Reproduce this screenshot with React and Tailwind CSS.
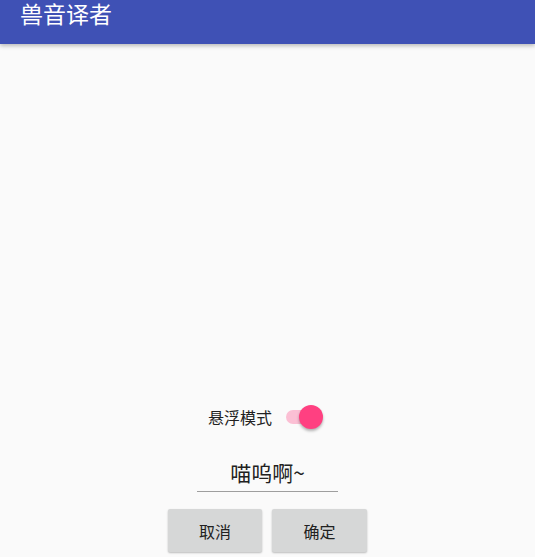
import React from "react";

export default function App() {
  const font = { fontFamily: '"Noto Sans CJK SC", "Noto Sans", sans-serif' };
  return (
    <div className="w-[535px] h-[557px] bg-[#fafafa] flex flex-col overflow-hidden" style={font}>
      <div className="h-[44px] bg-[#3f51b5] shadow-[0_2px_4px_rgba(0,0,0,0.25)] relative z-10 flex items-start pl-[20px]">
        <span className="text-white text-[23px] leading-[27px] mt-[0px]">兽音译者</span>
      </div>
      <div className="flex-1 flex flex-col items-center justify-end pb-[5px]">
        <div className="h-[30px] flex items-center ml-[-4px]">
          <span className="text-[16px] leading-[20px] text-[#212121] mr-[14px]">悬浮模式</span>
          <div className="relative w-[37px] h-[24px] flex items-center">
            <div className="w-[33px] h-[14px] rounded-full bg-[#fbbfd4]" />
            <div className="absolute right-0 top-0 w-[24px] h-[24px] rounded-full bg-[#ff4081] shadow-[0_2px_3px_rgba(0,0,0,0.3)]" />
          </div>
        </div>
        <div className="mt-[20px] w-[141px] h-[40px] border-b border-[#9e9e9e] flex items-center justify-center">
          <span className="text-[21px] leading-[28px] text-[#212121] mt-[1px]">喵呜啊~</span>
        </div>
        <div className="mt-[17px] flex gap-[10px]">
          <button className="w-[94px] h-[43px] rounded-[2px] bg-[#d6d7d7] shadow-[0_1px_2px_rgba(0,0,0,0.25)] text-[16px] text-[#212121]">取消</button>
          <button className="w-[95px] h-[43px] rounded-[2px] bg-[#d6d7d7] shadow-[0_1px_2px_rgba(0,0,0,0.25)] text-[16px] text-[#212121]">确定</button>
        </div>
      </div>
    </div>
  );
}
